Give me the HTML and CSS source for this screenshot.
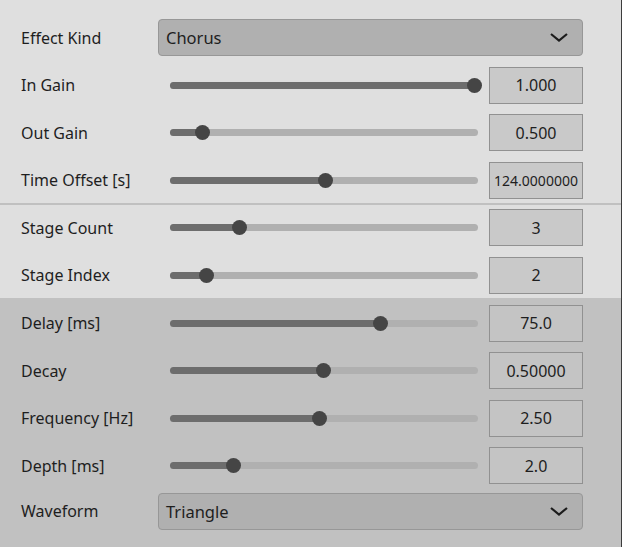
FILE: index.html
```html
<!DOCTYPE html>
<html>
<head>
<meta charset="utf-8">
<link rel="stylesheet" href="styles.css">
</head>
<body>
<div class="panel">
  <section class="group group-top">
    <div class="row">
      <div class="label">Effect Kind</div>
      <div class="select"><span>Chorus</span><svg class="chev" width="18" height="9" viewBox="0 0 18 9"><path d="M1 1 L9 7.5 L17 1" fill="none" stroke="#1c1c1c" stroke-width="2.2"/></svg></div>
    </div>
    <div class="row">
      <div class="label">In Gain</div>
      <div class="slider"><div class="track"><div class="fill" style="width:99%"><span class="thumb"></span></div></div></div>
      <div class="value">1.000</div>
    </div>
    <div class="row">
      <div class="label">Out Gain</div>
      <div class="slider"><div class="track"><div class="fill" style="width:10.7%"><span class="thumb"></span></div></div></div>
      <div class="value">0.500</div>
    </div>
    <div class="row">
      <div class="label">Time Offset [s]</div>
      <div class="slider"><div class="track"><div class="fill" style="width:50.6%"><span class="thumb"></span></div></div></div>
      <div class="value small">124.0000000</div>
    </div>
  </section>
  <section class="group group-mid">
    <div class="row">
      <div class="label">Stage Count</div>
      <div class="slider"><div class="track"><div class="fill" style="width:22.7%"><span class="thumb"></span></div></div></div>
      <div class="value">3</div>
    </div>
    <div class="row">
      <div class="label">Stage Index</div>
      <div class="slider"><div class="track"><div class="fill" style="width:12%"><span class="thumb"></span></div></div></div>
      <div class="value">2</div>
    </div>
  </section>
  <section class="group group-low">
    <div class="row">
      <div class="label">Delay [ms]</div>
      <div class="slider"><div class="track"><div class="fill" style="width:68.2%"><span class="thumb"></span></div></div></div>
      <div class="value">75.0</div>
    </div>
    <div class="row">
      <div class="label">Decay</div>
      <div class="slider"><div class="track"><div class="fill" style="width:49.7%"><span class="thumb"></span></div></div></div>
      <div class="value">0.50000</div>
    </div>
    <div class="row">
      <div class="label">Frequency [Hz]</div>
      <div class="slider"><div class="track"><div class="fill" style="width:48.7%"><span class="thumb"></span></div></div></div>
      <div class="value">2.50</div>
    </div>
    <div class="row">
      <div class="label">Depth [ms]</div>
      <div class="slider"><div class="track"><div class="fill" style="width:20.5%"><span class="thumb"></span></div></div></div>
      <div class="value">2.0</div>
    </div>
    <div class="row row-select">
      <div class="label">Waveform</div>
      <div class="select"><span>Triangle</span><svg class="chev" width="18" height="9" viewBox="0 0 18 9"><path d="M1 1 L9 7.5 L17 1" fill="none" stroke="#1c1c1c" stroke-width="2.2"/></svg></div>
    </div>
  </section>
</div>
</body>
</html>
```

FILE: styles.css
```css
html, body {
  margin: 0;
  padding: 0;
  background: #c1c1c1;
}
body {
  width: 622px;
  height: 547px;
  overflow: hidden;
  font-family: "Noto Sans", "DejaVu Sans", sans-serif;
  color: #1e1e1e;
}
.panel {
  width: 621px;
  height: 547px;
  border-right: 1px solid #3c3c3c;
  display: flex;
  flex-direction: column;
}
.group {
  display: flex;
  flex-direction: column;
  gap: 10.5px;
  padding-left: 21px;
  padding-right: 38px;
}
.group-top {
  background: #dfdfdf;
  padding-top: 19px;
  padding-bottom: 4.5px;
  border-bottom: 2px solid #c0c0c0;
}
.group-mid {
  background: #dfdfdf;
  padding-top: 4px;
  padding-bottom: 4.5px;
}
.group-low {
  background: #c1c1c1;
  padding-top: 6.5px;
  flex: 1;
}
.row {
  height: 37px;
  display: flex;
  align-items: center;
}
.row-select {
  margin-top: -2px;
}
.label {
  width: 137px;
  font-size: 16px;
  line-height: 20px;
  white-space: nowrap;
}
.select {
  flex: 1;
  height: 35px;
  box-sizing: border-box;
  height: 37px;
  background: #b0b0b0;
  border: 1px solid #979797;
  border-radius: 4px;
  display: flex;
  align-items: center;
  justify-content: space-between;
  padding: 0 14px 0 7px;
  font-size: 16.5px;
}
.chev {
  display: block;
}
.slider {
  width: 308px;
  margin-left: 12px;
  margin-right: 11px;
}
.track {
  height: 7px;
  border-radius: 4px;
  background: #b0b0b0;
  position: relative;
}
.fill {
  height: 7px;
  border-radius: 4px;
  background: #6d6d6d;
  position: relative;
}
.thumb {
  position: absolute;
  right: -7.5px;
  top: -4px;
  width: 15px;
  height: 15px;
  border-radius: 50%;
  background: #454545;
}
.value {
  width: 94px;
  height: 37px;
  box-sizing: border-box;
  background: #c9c9c9;
  border: 1px solid #919191;
  display: flex;
  align-items: center;
  justify-content: center;
  font-size: 16px;
}
.group-low .value {
  background: #c4c4c4;
}
.value.small {
  font-size: 14px;
}
```
